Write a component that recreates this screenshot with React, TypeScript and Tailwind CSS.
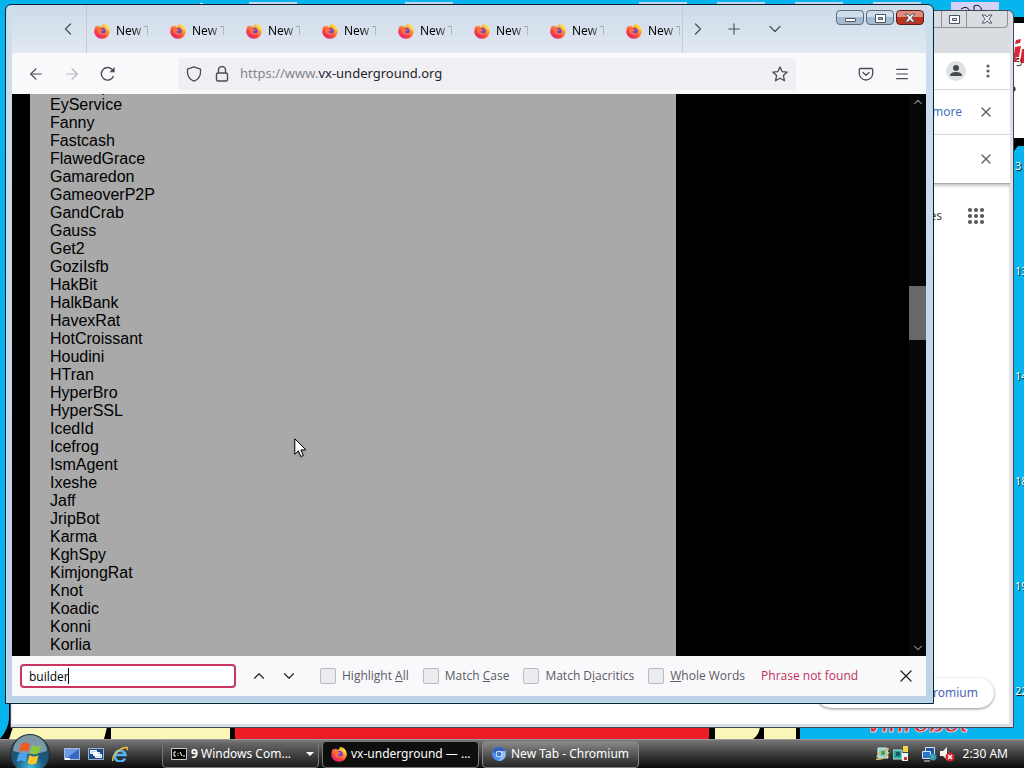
import { useState } from 'react';
import type { ReactNode } from 'react';
import { ArrowLeft, ArrowRight, ChevronDown, ChevronLeft, ChevronRight, ChevronUp, Menu, Pencil, Plus, X } from 'lucide-react';

const samples = [
  'EvilCorp', 'EyService', 'Fanny', 'Fastcash', 'FlawedGrace', 'Gamaredon', 'GameoverP2P', 'GandCrab',
  'Gauss', 'Get2', 'GoziIsfb', 'HakBit', 'HalkBank', 'HavexRat', 'HotCroissant', 'Houdini', 'HTran',
  'HyperBro', 'HyperSSL', 'IcedId', 'Icefrog', 'IsmAgent', 'Ixeshe', 'Jaff', 'JripBot', 'Karma',
  'KghSpy', 'KimjongRat', 'Knot', 'Koadic', 'Konni', 'Korlia',
];

const tabs = [1, 2, 3, 4, 5, 6, 7, 8];

const desktopLabels = ['3', '3', '13', '14', '18', '19', '22'];

function FirefoxIcon() {
  return (
    <svg viewBox="0 0 16 16" className="h-4 w-4 shrink-0" aria-hidden="true">
      <defs>
        <linearGradient id="fox" x1="0.85" y1="0.05" x2="0.2" y2="0.95">
          <stop offset="0" stopColor="#ffe94a" />
          <stop offset="0.35" stopColor="#ff9a2a" />
          <stop offset="0.7" stopColor="#ff3d47" />
          <stop offset="1" stopColor="#e5226f" />
        </linearGradient>
      </defs>
      <path d="M1.2 4.2 2.6 2.4l.6 1.4L5 2.6l1 1.2 1.6-.4L9.8.4l1 1.8c2.600 1 5 3.400 5 6.200A7.700 7.400 0 0 1 8 15.800C3.600 15.800.3 12.600.3 8.600c0-1.600.3-3.100.9-4.400Z" fill="url(#fox)" />
      <circle cx="8.200" cy="8.200" r="3.500" fill="#7540d8" />
      <path d="M3 5.200c1.700-.7 3.600-.3 4.800 1 .7.200 1.500.2 2 .5-.3 1-1.600 1.200-2.600 1.600-.6.600-.2 1.600.9 1.900 1.400.4 2.400-.4 3.600-.5-.7 1.800-3 2.700-5 1.900C4 10.800 2.700 8 3 5.200Z" fill="#ff7139" />
      <path d="M10 1c.4 2 3 3.100 3.200 6 .7-.5.8-1.200.7-1.900 1.400 2 1.600 4.400.4 6.500 1.900-3.500 1.400-7.600-2-9.500Z" fill="#ffe04a" />
    </svg>
  );
}

function ChromiumIcon() {
  return (
    <svg viewBox="0 0 16 16" className="h-4 w-4 shrink-0" aria-hidden="true">
      <circle cx="8" cy="8" r="7" fill="#4c8df0" />
      <path d="M2 4.500A7 7 0 0 1 14.200 5H8L5 9.600Z" fill="#2a5fbe" />
      <path d="M14.200 5A7 7 0 0 1 7.500 15l3.400-5.500L8 5Z" fill="#8fbcf8" />
      <circle cx="8" cy="8" r="3.300" fill="#fff" />
      <circle cx="8" cy="8" r="2.500" fill="#3b78d8" />
    </svg>
  );
}

function Glyph({ kind }: { kind: 'min' | 'max' | 'close' }) {
  return (
    <svg viewBox="0 0 14 12" className="h-3 w-3.5" aria-hidden="true" fill="#fff" stroke="#4b5563">
      {kind === 'min' && <rect x="2.500" y="6.500" width="10" height="3" rx="0.500" />}
      {kind === 'max' && <path fillRule="evenodd" d="M2.500 2.500h10v8h-10ZM5.500 5.500v2h4v-2Z" />}
      {kind === 'close' && <path d="M2 2h3l2 2.200L9 2h3L8.700 6l3.300 4H9L7 7.800 5 10H2l3.300-4Z" />}
    </svg>
  );
}

function Wallpaper() {
  return (
    <svg viewBox="0 0 1024 739" preserveAspectRatio="none" className="absolute inset-0 h-full w-full" aria-hidden="true">
      <rect width="1024" height="739" fill="#06b5ee" />
      <path d="M249 2h48v3h-48ZM405 2h48v3h-48ZM639 2h48v3h-48ZM717 2h48v3h-48ZM795 2h48v3h-48ZM873 2h48v3h-48Z" fill="#c5d4f2" />
      <path d="M200 3h3v2h-3Z" fill="#e8f4ff" />
      <path d="M951 2h48v14h-48Z" fill="#d5d0f7" />
      <path d="M961 9q6-4 9 2M974 12V6q6-3 8 5" fill="none" stroke="#111" />
      <path d="M1010 17h14v128h-14Z" fill="#000" />
      <path d="M1010 23h14v115h-14Z" fill="#fff" />
      <path d="M1024 138v8h-6l-4 5v-7q1-5 5-6Z" fill="#000" />
      <path d="m1016 40 5-1-1 4-5 1ZM1015 47l6-1-3 16h-5ZM1022 49h2v14h-4Z" fill="#d92835" />
      <path d="M1012 87q4 0 2 4" fill="none" stroke="#333" strokeWidth="2" />
      <path d="M9 700v18q0 10-9 21h800v-39Z" fill="#000" />
      <path d="m13 727-4 12h95l3-12ZM111 727h119v12H111ZM715 727h45q-1 8-7 12h-38ZM764 727h32v12h-32Z" fill="#fbf7b9" />
      <rect x="235" y="727" width="474" height="12" fill="#ed1c24" />
      <text x="866" y="732" fontSize="25" fontWeight="bold" fontStyle="italic" fontFamily="Liberation Sans, sans-serif" fill="#d92835" stroke="#e9c6d0">Vinrobot</text>
    </svg>
  );
}

function ChromiumWindow() {
  return (
    <section className="absolute top-2.5 right-2.5 bottom-[11px] left-2.5 flex flex-col rounded-t-md border border-[#3f4954] bg-[#dcdfe8] pr-[3px] pb-[3px]">
      <div className="flex h-[42px] items-start justify-end bg-[#d9dce0] pr-0.5">
        <div className="flex rounded-b border border-t-0 border-[#8d9299]">
          <button type="button" aria-label="Minimize" className="flex h-4 w-7 items-center justify-center"><Glyph kind="min" /></button>
          <button type="button" aria-label="Restore" className="flex h-4 w-[26px] items-center justify-center border-x border-[#8d9299]"><Glyph kind="max" /></button>
          <button type="button" aria-label="Close" className="flex h-4 w-10 items-center justify-center"><Glyph kind="close" /></button>
        </div>
      </div>
      <div className="flex h-[37px] items-center justify-end gap-3 border-b border-[#d5d7da] bg-white pr-3">
        <button type="button" aria-label="Profile" className="flex h-5 w-5 items-center justify-center rounded-full bg-[#dfe1e5]">
          <svg viewBox="0 0 16 16" className="h-4 w-4" fill="#454a50" aria-hidden="true">
            <circle cx="8" cy="5" r="3" /><path d="M2 13q0-4 6-4t6 4Z" />
          </svg>
        </button>
        <button type="button" aria-label="More" className="flex h-5 w-5 items-center justify-center">
          <svg viewBox="0 0 20 20" className="h-5 w-5" fill="#5f6368" aria-hidden="true">
            <circle cx="10" cy="5" r="1.600" /><circle cx="10" cy="10" r="1.600" /><circle cx="10" cy="15" r="1.600" />
          </svg>
        </button>
      </div>
      <div className="flex h-[45px] items-center justify-end gap-4 border-b border-[#d5d7da] bg-white pr-4 text-[12px] text-[#4272c4]">
        <a href="#learn">Learn more</a>
        <button type="button" aria-label="Dismiss"><X className="h-4 w-4 text-[#606468]" /></button>
      </div>
      <div className="flex h-[49px] items-center justify-end border-b border-[#a9abad] bg-white pr-4">
        <button type="button" aria-label="Dismiss"><X className="h-4 w-4 text-[#606468]" /></button>
      </div>
      <div className="flex flex-1 flex-col items-end justify-between bg-white inset-shadow-[0_2px_3px_#c4c6c8]">
        <div className="flex items-center gap-6 pt-5 pr-6 text-[12px] text-[#3c4043]">
          <a href="#images">Images</a>
          <button type="button" aria-label="Apps">
            <svg viewBox="0 0 20 24" className="h-6 w-5" fill="#55595e" aria-hidden="true">
              {[6, 12, 18].map((y) => [4, 10, 16].map((x) => <circle key={`${x}-${y}`} cx={x} cy={y} r="2.100" />))}
            </svg>
          </button>
        </div>
        <button type="button" className="mr-4 mb-4 flex h-[30px] items-center gap-2 rounded-full px-4 text-[12px] text-[#4a64b8] shadow-[0_1px_3px_#8a8d92]">
          <Pencil className="h-4 w-4" />
          Customize Chromium
        </button>
      </div>
    </section>
  );
}

function TabStrip() {
  return (
    <div className="flex h-12 items-center pl-[42px] text-[#4c525c]">
      <button type="button" aria-label="Scroll tabs left" className="mr-1 flex h-7 w-7 shrink-0 items-center justify-center">
        <ChevronLeft className="h-5 w-5" strokeWidth={1.5} />
      </button>
      <div className="flex h-full min-w-0 flex-1 overflow-hidden border-x border-[#c3cbd8]">
        {tabs.map((tab) => (
          <button key={tab} type="button" className="flex w-[76px] shrink-0 items-center gap-1.5 overflow-hidden pt-1 pl-[7px] text-[12px] whitespace-nowrap text-black">
            <FirefoxIcon />
            <span className="w-8 shrink-0 overflow-hidden mask-r-from-50% mask-r-to-110% text-left">New Tab</span>
          </button>
        ))}
      </div>
      <button type="button" aria-label="Scroll tabs right" className="flex h-7 w-[30px] shrink-0 items-center justify-center">
        <ChevronRight className="h-5 w-5" strokeWidth={1.5} />
      </button>
      <button type="button" aria-label="New tab" className="ml-[7px] flex h-7 w-7 shrink-0 items-center justify-center">
        <Plus className="h-[18px] w-[18px]" strokeWidth={1.5} />
      </button>
      <button type="button" aria-label="List all tabs" className="ml-[13px] flex h-7 w-7 shrink-0 items-center justify-center">
        <ChevronDown className="h-5 w-5" strokeWidth={1.5} />
      </button>
      <div className="mt-[5px] mr-0.5 ml-[47px] flex shrink-0 gap-0.5 self-start">
        <button type="button" aria-label="Minimize" className="flex h-[15px] w-7 items-center justify-center rounded-sm border border-[#596c80] bg-linear-to-b from-[#d0deec] from-50% to-[#a5bbcf] to-50%"><Glyph kind="min" /></button>
        <button type="button" aria-label="Restore" className="flex h-[15px] w-7 items-center justify-center rounded-sm border border-[#596c80] bg-linear-to-b from-[#d0deec] from-50% to-[#a5bbcf] to-50%"><Glyph kind="max" /></button>
        <button type="button" aria-label="Close" className="flex h-[15px] w-7 items-center justify-center rounded-sm border border-[#5a1a17] bg-linear-to-b from-[#df8c80] from-50% to-[#bd3423] to-50%"><Glyph kind="close" /></button>
      </div>
    </div>
  );
}

function NavBar() {
  return (
    <div className="flex h-[41px] items-center bg-[#f9f9fb] px-2 text-[#4b4b55]">
      <button type="button" aria-label="Back" className="flex h-8 w-8 items-center justify-center"><ArrowLeft className="h-[18px] w-[18px]" strokeWidth={1.5} /></button>
      <button type="button" aria-label="Forward" className="ml-1 flex h-8 w-8 items-center justify-center text-[#b6b6bc]"><ArrowRight className="h-[18px] w-[18px]" strokeWidth={1.5} /></button>
      <button type="button" aria-label="Reload" className="ml-1 flex h-8 w-8 items-center justify-center">
        <svg viewBox="0 0 16 16" className="h-4 w-4" fill="none" stroke="currentColor" strokeWidth="1.400" aria-hidden="true">
          <path d="M13.500 10A6.300 6.300 0 1 1 12.800 4.200" /><path d="M14.600 1v5.200H9.400Z" fill="currentColor" stroke="none" />
        </svg>
      </button>
      <div className="ml-[54px] flex h-8 min-w-0 flex-1 items-center rounded bg-[#f0f0f4] px-2">
        <svg viewBox="0 0 16 16" className="h-4 w-4 shrink-0" fill="none" stroke="currentColor" strokeWidth="1.300" strokeLinejoin="round" aria-hidden="true">
          <path d="M8 .8 14.500 3.200v3C14.500 10.500 12 13.500 8 15.200 4 13.500 1.500 10.500 1.500 6.200v-3Z" />
        </svg>
        <svg viewBox="0 0 16 16" className="ml-3 h-4 w-4 shrink-0" fill="none" stroke="currentColor" strokeWidth="1.400" aria-hidden="true">
          <rect x="2.500" y="7" width="11" height="8" rx="1.500" /><path d="M4.500 7V4a3.500 3.500 0 0 1 7 0v3" />
        </svg>
        <a href="#page" className="ml-2.5 flex-1 text-[13px] text-[#84848c]">
          https://www.<span className="text-[#22222a]">vx-underground.org</span>
        </a>
        <button type="button" aria-label="Bookmark">
          <svg viewBox="0 0 16 16" className="h-4 w-4" fill="none" stroke="currentColor" strokeWidth="1.300" strokeLinejoin="round" aria-hidden="true">
            <path d="m8 .9 2.100 4.700 5.100.5-3.800 3.500 1.100 5.200L8 12.200l-4.500 2.600 1.100-5.200L.8 6.100l5.100-.5Z" />
          </svg>
        </button>
      </div>
      <button type="button" aria-label="Save to Pocket" className="ml-[54px] flex h-8 w-8 items-center justify-center">
        <svg viewBox="0 0 16 16" className="h-4 w-4" fill="none" stroke="currentColor" strokeWidth="1.300" strokeLinecap="round" strokeLinejoin="round" aria-hidden="true">
          <path d="M2.500 2.500h11q1.200 0 1.200 1.200V7.500a6.700 6.500 0 0 1-13.400 0V3.700q0-1.200 1.200-1.200Z" /><path d="M5 6.500 8 9.200l3-2.700" />
        </svg>
      </button>
      <button type="button" aria-label="Menu" className="ml-1 flex h-8 w-8 items-center justify-center"><Menu className="h-4 w-4" strokeWidth={1.75} /></button>
    </div>
  );
}

function FindOption({ children }: { children: ReactNode }) {
  return (
    <label className="flex items-center gap-1.5 whitespace-nowrap">
      <input type="checkbox" className="h-4 w-4 appearance-none rounded-xs border border-[#b9b9bf] bg-[#ececef]" />
      <span>{children}</span>
    </label>
  );
}

function FindBar() {
  const [query, setQuery] = useState('builder');

  return (
    <div className="flex h-10 items-center bg-[#f9f9fb] px-2 font-['Open_Sans','Noto_Sans',sans-serif] text-[12px] text-[#5b5b66]">
      <div className="relative w-54 shrink-0">
        <input
          aria-label="Find in page"
          value={query}
          onChange={(event) => setQuery(event.target.value)}
          className="block h-6 w-full rounded-sm border-2 border-[#c9355f] bg-white px-[7px] text-[12px] text-black outline-none"
        />
        <span className="absolute top-1 left-12 h-4 w-px bg-black" />
      </div>
      <button type="button" aria-label="Previous" className="ml-3 flex h-6 w-[22px] items-center justify-center text-[#222]"><ChevronUp className="h-[18px] w-[18px]" strokeWidth={1.5} /></button>
      <button type="button" aria-label="Next" className="ml-2 flex h-6 w-[22px] items-center justify-center text-[#222]"><ChevronDown className="h-[18px] w-[18px]" strokeWidth={1.5} /></button>
      <div className="ml-5 flex items-center gap-3.5">
        <FindOption>Highlight <u>A</u>ll</FindOption>
        <FindOption>Match <u>C</u>ase</FindOption>
        <FindOption>Match D<u>i</u>acritics</FindOption>
        <FindOption><u>W</u>hole Words</FindOption>
      </div>
      <p className="ml-4 whitespace-nowrap text-[#c0305c]">Phrase not found</p>
      <button type="button" aria-label="Close find bar" className="mr-0.5 ml-auto"><X className="h-5 w-5 text-[#222]" strokeWidth={1.5} /></button>
    </div>
  );
}

function FirefoxWindow() {
  return (
    <section className="absolute top-1 right-[90px] bottom-[35px] left-[5px] flex flex-col rounded-t-md border border-[#10202c] bg-linear-to-b from-[#cfdeee] to-[#bdd1e8] pr-[7px] pb-[7px] pl-1.5 inset-shadow-[0_0_0_1px_#b4e3ef]">
      <div className="bg-linear-to-b from-[#cddae8] to-[#e1e9f2]">
        <TabStrip />
      </div>
      <NavBar />
      <main className="flex min-h-0 flex-1 overflow-hidden bg-black">
        <div className="min-w-0 flex-1 pl-[18px]">
          <div className="h-full w-full max-w-[646px] overflow-hidden bg-[#a9a9a9]">
            <ul className="-mt-4 pl-5 font-['Liberation_Sans',Arial,sans-serif] text-[16px] leading-[18px] text-black">
              {samples.map((name) => (
                <li key={name}>{name}</li>
              ))}
            </ul>
          </div>
        </div>
        <div className="flex w-[17px] flex-col items-center bg-[#060608] text-[#77777b]">
          <ChevronUp className="h-4 w-3.5 shrink-0" />
          <div className="flex-1 self-stretch">
            <div className="mt-44 h-[54px] bg-[#686868]" />
          </div>
          <ChevronDown className="h-4 w-3.5 shrink-0" />
        </div>
      </main>
      <FindBar />
    </section>
  );
}

function StartOrb() {
  return (
    <svg viewBox="0 0 44 44" className="h-11 w-11" aria-hidden="true">
      <defs>
        <radialGradient id="orb" cx="0.5" cy="0.85" r="0.8">
          <stop offset="0" stopColor="#3fc0dc" />
          <stop offset="0.45" stopColor="#1c5a80" />
          <stop offset="1" stopColor="#2d4658" />
        </radialGradient>
      </defs>
      <circle cx="22" cy="20" r="19.500" fill="url(#orb)" stroke="#1d2d38" />
      <path d="M5 17a17 16 0 0 1 34 0q-17 6-34 0Z" fill="#c5d7e0" opacity="0.550" />
      <path d="M13 10q5-3 9 0l-2 8q-4-3-9 0Z" fill="#ee5a24" />
      <path d="M24 11q5 3 9 0l-2 8q-5 3-9 0Z" fill="#8cc63f" />
      <path d="M10.500 20q5-3 9 0l-2 8q-4-3-9 0Z" fill="#4aa3ea" />
      <path d="M21.500 21q5 3 9 0l-2 8q-5 3-9 0Z" fill="#fdc52c" />
    </svg>
  );
}

function TrayIcons() {
  return (
    <div className="flex items-center">
      <svg viewBox="0 0 16 16" className="h-4 w-4" aria-hidden="true">
        <path d="M3 2h9l1 10H3Z" fill="#8bd4e3" stroke="#d9f3f7" /><path d="M1 13q8 2 13-7M2 11q1-6 12-8" fill="none" stroke="#d8b95c" strokeWidth="1.500" /><path d="M6 5h4v4H6Z" fill="#4ca34a" />
      </svg>
      <svg viewBox="0 0 16 16" className="ml-0.5 h-4 w-4" aria-hidden="true">
        <path d="M0 4h9v9H0Z" fill="#2ba49a" stroke="#b9e8e2" /><path d="M3 6h4v4H3Z" fill="#175968" /><path d="M10 0h5v6h-5Z" fill="#f2d445" /><path d="M9 7h6v8H9Z" fill="#e8f3ef" /><path d="M11 11h3v3h-3Z" fill="#d03030" />
      </svg>
      <svg viewBox="0 0 16 16" className="ml-3 h-4 w-4" aria-hidden="true">
        <path d="M4.500 1.500h9v8h-9Z" fill="#1a55a8" stroke="#d8e6f5" /><path d="M1.500 5.500h8v7h-8Z" fill="#2f73c8" stroke="#d8e6f5" /><path d="M3 15h6" stroke="#d8e6f5" /><circle cx="12" cy="11" r="3.500" fill="#2d91d2" /><path d="M10 9q3 0 3 3l-2 2Z" fill="#54bd4a" />
      </svg>
      <svg viewBox="0 0 16 16" className="ml-0.5 h-4 w-4" aria-hidden="true">
        <path d="M1 5h3l4-4v13l-4-4H1Z" fill="#f2f2f2" /><circle cx="11" cy="11" r="4.500" fill="#d9222a" /><path d="m9 9 4 4m0-4-4 4" stroke="#fff" strokeWidth="1.500" />
      </svg>
    </div>
  );
}

function Taskbar() {
  return (
    <footer className="relative flex h-[29px] shrink-0 items-center border-t border-[#9a9a9a] bg-linear-to-b from-[#777] via-[#3c3c3c] via-50% to-[#0c0c0c] pr-4 text-[12px] text-white">
      <button type="button" aria-label="Start" className="absolute -top-1.5 left-2 h-9 overflow-hidden">
        <StartOrb />
      </button>
      <div className="ml-16 flex items-center gap-2">
        <svg viewBox="0 0 16 16" className="h-4 w-4" aria-hidden="true"><path d="M.5 2.500h15v11H.5Z" fill="#3468c2" stroke="#a9bcd8" /><path d="M1 3h14L3 12H1Z" fill="#6c9ce6" /><path d="M1 13h5" stroke="#fff" strokeWidth="2" /></svg>
        <svg viewBox="0 0 16 16" className="h-4 w-4" aria-hidden="true"><path d="M.5 2.500h15v11H.5Z" fill="#1c4a88" stroke="#9fb3cc" /><path d="M2.500 4.500h6v3h-6ZM5.500 6.500h6v3h-6ZM7.500 8.500h6v3h-6Z" fill="#b9d5f2" stroke="#fff" /></svg>
        <svg viewBox="0 0 16 16" className="h-4 w-4" aria-hidden="true">
          <path d="M13 12.500A5.500 5.500 0 1 1 13.500 9H4" fill="none" stroke="#4db8f5" strokeWidth="2.600" /><path d="M1 15C-1 11 8 1 15 1.500c1 1 0 2.500 0 2.500" fill="none" stroke="#f5c63c" strokeWidth="1.400" />
        </svg>
      </div>
      <div className="ml-[34px] flex min-w-0 flex-1 gap-[3px]">
        <button type="button" className="flex h-[27px] w-[157px] items-center gap-1 rounded-sm border border-[#777] bg-linear-to-b from-[#6b6b6b] to-[#1e1e1e] pr-1 pl-2 whitespace-nowrap">
          <svg viewBox="0 0 16 12" className="h-3 w-4" aria-hidden="true"><path d="M.5.500h15v11H.5Z" fill="#050505" stroke="#ccc" /><path d="M5 4H3v4h2M7 5v1m0 1v1M9 4l2 4M12 8h2" stroke="#fff" fill="none" /></svg>
          <span><b>9</b> Windows Com...</span>
          <svg viewBox="0 0 8 4" className="ml-auto h-1 w-2" fill="#fff" aria-hidden="true"><path d="M0 0h8L4 4Z" /></svg>
        </button>
        <button type="button" className="flex h-[27px] w-[157px] items-center gap-1 rounded-sm border border-[#777] bg-[#0e0e0e] px-2 whitespace-nowrap">
          <FirefoxIcon />
          <span>vx-underground — ...</span>
        </button>
        <button type="button" className="flex h-[27px] w-[157px] items-center gap-1 rounded-sm border border-[#858585] bg-linear-to-b from-[#8a8a8a] to-[#262626] px-2 whitespace-nowrap">
          <ChromiumIcon />
          <span>New Tab - Chromium</span>
        </button>
      </div>
      <TrayIcons />
      <time className="ml-2">2:30 AM</time>
    </footer>
  );
}

export default function App() {
  return (
    <div className="flex h-screen flex-col overflow-hidden font-['Noto_Sans','Open_Sans',sans-serif]">
      <div className="relative min-h-0 flex-1">
        <Wallpaper />
        <ul className="absolute top-13 right-0 flex w-[9px] flex-col gap-[87px] overflow-hidden text-[11px] leading-[18px] text-white text-shadow-[1px_1px_1px_#000]">
          {desktopLabels.map((label, index) => (
            <li key={index}>{label}</li>
          ))}
        </ul>
        <ChromiumWindow />
        <FirefoxWindow />
        <svg viewBox="0 0 14 20" className="absolute top-[438px] left-[294px] h-5 w-3.5 drop-shadow" aria-hidden="true">
          <path d="M.8.800v15.400l3.600-3.400 2.400 5.700 2.500-1-2.400-5.600h5Z" fill="#fff" stroke="#000" />
        </svg>
      </div>
      <Taskbar />
    </div>
  );
}
